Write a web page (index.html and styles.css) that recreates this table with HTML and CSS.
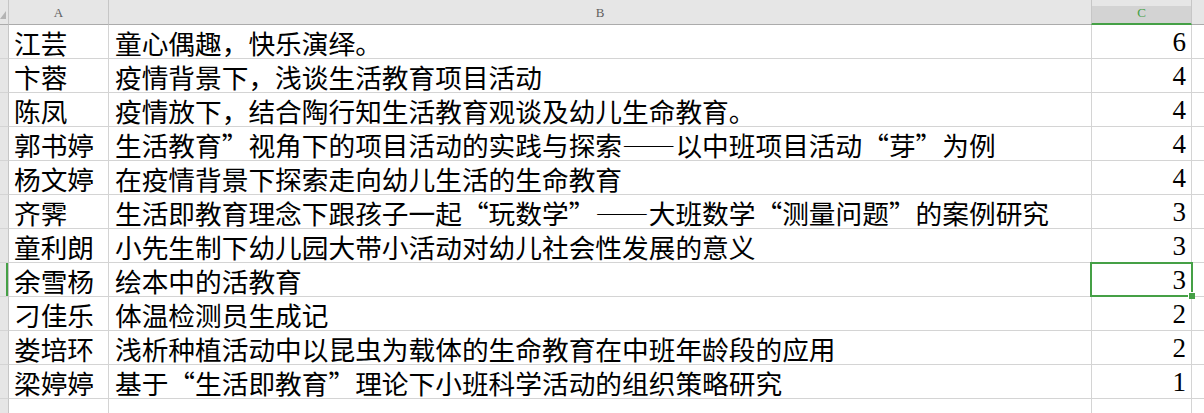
FILE: index.html
```html
<!DOCTYPE html>
<html lang="zh-CN">
<head>
<meta charset="utf-8">
<title>Sheet</title>
<link rel="stylesheet" href="styles.css">
</head>
<body>
<div class="sheet">
  <div class="corner"><span class="tri"></span></div>
  <div class="colhead">A</div>
  <div class="colhead">B</div>
  <div class="colhead sel">C</div>
  <div class="colhead blank"></div>

  <div class="rh"></div><div class="c a">江芸</div><div class="c b">童心偶趣，快乐演绎。</div><div class="c n">6</div><div class="c x"></div>
  <div class="rh"></div><div class="c a">卞蓉</div><div class="c b">疫情背景下，浅谈生活教育项目活动</div><div class="c n">4</div><div class="c x"></div>
  <div class="rh"></div><div class="c a">陈凤</div><div class="c b">疫情放下，结合陶行知生活教育观谈及幼儿生命教育。</div><div class="c n">4</div><div class="c x"></div>
  <div class="rh"></div><div class="c a">郭书婷</div><div class="c b">生活教育”视角下的项目活动的实践与探索——以中班项目活动“芽”为例</div><div class="c n">4</div><div class="c x"></div>
  <div class="rh"></div><div class="c a">杨文婷</div><div class="c b">在疫情背景下探索走向幼儿生活的生命教育</div><div class="c n">4</div><div class="c x"></div>
  <div class="rh"></div><div class="c a">齐霁</div><div class="c b">生活即教育理念下跟孩子一起“玩数学”——大班数学“测量问题”的案例研究</div><div class="c n">3</div><div class="c x"></div>
  <div class="rh"></div><div class="c a">童利朗</div><div class="c b">小先生制下幼儿园大带小活动对幼儿社会性发展的意义</div><div class="c n">3</div><div class="c x"></div>
  <div class="rh selrow"></div><div class="c a">余雪杨</div><div class="c b">绘本中的活教育</div><div class="c n active">3<i class="handle"></i></div><div class="c x"></div>
  <div class="rh"></div><div class="c a">刁佳乐</div><div class="c b">体温检测员生成记</div><div class="c n">2</div><div class="c x"></div>
  <div class="rh"></div><div class="c a">娄培环</div><div class="c b">浅析种植活动中以昆虫为载体的生命教育在中班年龄段的应用</div><div class="c n">2</div><div class="c x"></div>
  <div class="rh"></div><div class="c a">梁婷婷</div><div class="c b">基于“生活即教育”理论下小班科学活动的组织策略研究</div><div class="c n">1</div><div class="c x"></div>
  <div class="rh"></div><div class="c a"></div><div class="c b"></div><div class="c n"></div><div class="c x"></div>
</div>
</body>
</html>
```

FILE: styles.css
```css
html, body {
  margin: 0;
  padding: 0;
  background: #ffffff;
  overflow: hidden;
}

.sheet {
  display: grid;
  grid-template-columns: 9px 100px 983px 100px 12px;
  grid-template-rows: 25px repeat(12, 34px);
  width: 1204px;
  height: 413px;
  overflow: hidden;
}

.corner {
  background: #e6e6e6;
  border-right: 1px solid #c6c6c6;
  border-bottom: 1px solid #ababab;
  position: relative;
  box-sizing: border-box;
}

.tri {
  position: absolute;
  left: 0;
  top: 11px;
  width: 0;
  height: 0;
  border-left: 6px solid transparent;
  border-bottom: 8px solid #b4b4b4;
}

.colhead {
  background: #e6e6e6;
  border-right: 1px solid #e6e6e6;
  border-bottom: 1px solid #ababab;
  box-sizing: border-box;
  font-family: "Liberation Serif", serif;
  font-size: 13px;
  color: #606060;
  text-align: center;
  line-height: 22px;
  padding-top: 2px;
}

.colhead:nth-child(2) {
  border-right-color: #c6c6c6;
}

.colhead.sel {
  background: linear-gradient(#e6e6e6 0, #e6e6e6 6px, #d3d3d3 6px);
  border-bottom: 2px solid #45a046;
  border-left: 1px solid #c6c6c6;
  border-right: 1px solid #c6c6c6;
  color: #45a046;
  line-height: 21px;
  margin-left: -1px;
}

.colhead.blank {
  border-right: none;
}

.rh {
  background: #e6e6e6;
  border-right: 1px solid #c6c6c6;
  border-bottom: 1px solid #d4d4d4;
  box-sizing: border-box;
}

.rh.selrow {
  box-shadow: inset -2px 0 0 #45a046;
}

.c {
  box-sizing: border-box;
  border-right: 1px solid #d4d4d4;
  border-bottom: 1px solid #d4d4d4;
  font-family: "Noto Sans CJK SC", "Noto Sans", sans-serif;
  font-size: 26.7px;
  color: #000000;
  white-space: nowrap;
  line-height: 33px;
  padding-top: 1px;
}

.c.a {
  padding-left: 5px;
}

.c.b {
  padding-left: 6px;
}

.c.n {
  font-family: "Liberation Serif", serif;
  font-size: 27px;
  text-align: right;
  padding-right: 5px;
  position: relative;
}

.c.x {
  border-right: none;
}

.c.n.active::after {
  content: "";
  position: absolute;
  left: -2px;
  top: -1px;
  right: -2px;
  bottom: -1px;
  border: 2px solid #45a046;
  pointer-events: none;
}

.handle {
  position: absolute;
  right: -4px;
  bottom: -3px;
  width: 6px;
  height: 6px;
  background: #45a046;
  border-left: 1px solid #ffffff;
  border-top: 1px solid #ffffff;
  z-index: 2;
}
```
